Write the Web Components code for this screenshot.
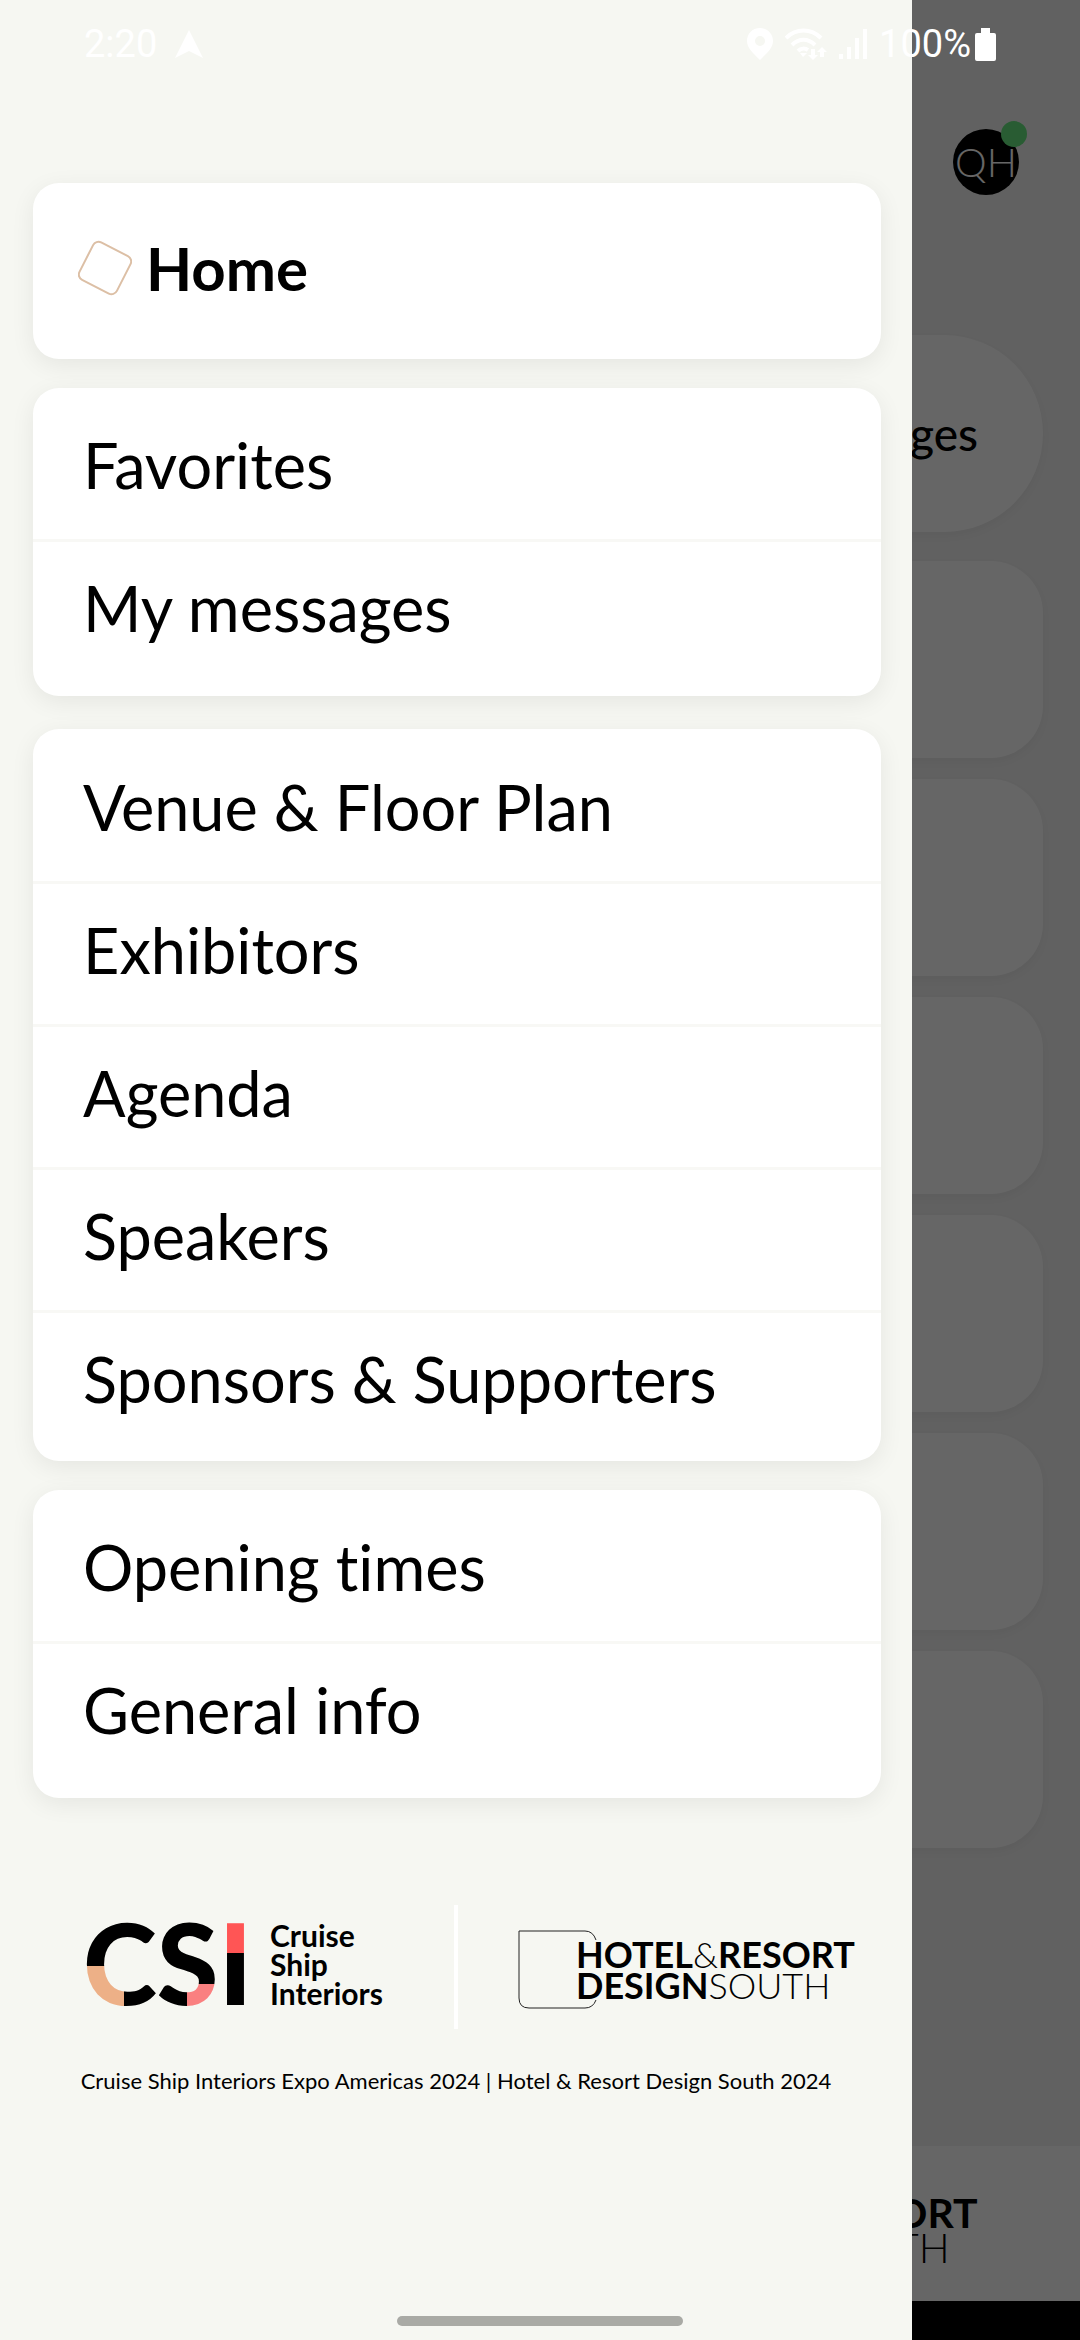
<!DOCTYPE html>
<html lang="en">
<head>
<meta charset="utf-8">
<meta name="viewport" content="width=device-width, initial-scale=1">
<title>Cruise Ship Interiors Expo Americas 2024</title>
<style>
  :root {
    --surface: #f6f7f2;
    --page: #f3f3f3;
    --card: #ffffff;
    --text: #000000;
    --accent: #dcbfa5;
  }

  body {
    color: var( --text );
    font-family: Lato, 'Open Sans', sans-serif;
    font-variant-ligatures: none;
    margin: 0;
  }
</style>
</head>
<body>

<event-app>
  <home-page slot="page"></home-page>
  <side-drawer slot="drawer">
    <menu-card>
      <menu-item active>Home</menu-item>
    </menu-card>
    <menu-card>
      <menu-item>Favorites</menu-item>
      <menu-item>My messages</menu-item>
    </menu-card>
    <menu-card long>
      <menu-item>Venue &amp; Floor Plan</menu-item>
      <menu-item>Exhibitors</menu-item>
      <menu-item>Agenda</menu-item>
      <menu-item>Speakers</menu-item>
      <menu-item>Sponsors &amp; Supporters</menu-item>
    </menu-card>
    <menu-card>
      <menu-item>Opening times</menu-item>
      <menu-item>General info</menu-item>
    </menu-card>
    <csi-logo slot="first"></csi-logo>
    <hotel-logo slot="second"></hotel-logo>
    <span slot="caption">Cruise Ship Interiors Expo Americas 2024 | Hotel &amp; Resort Design South 2024</span>
  </side-drawer>
  <status-bar slot="status">2:20</status-bar>
</event-app>

<script>
// Shared setup
// Clones the markup of the class into an open root
class EventElement extends HTMLElement {
  constructor() {
    super();

    const template = document.createElement( 'template' );
    template.innerHTML = this.constructor.markup;

    // Root
    this.attachShadow( {mode: 'open'} );
    this.shadowRoot.appendChild( template.content.cloneNode( true ) );
  }
}

class EventApp extends EventElement {
  static markup = /* template */ `
    <style>
      :host {
        display: block;
        min-height: 100vh;
        position: relative;
      }

      .scrim {
        background: rgba( 0, 0, 0, 0.6 );
        inset: 0;
        position: absolute;
      }

      ::slotted( side-drawer ) {
        bottom: 0;
        left: 0;
        position: absolute;
        right: 168px;
        top: 0;
      }

      ::slotted( status-bar ) {
        left: 0;
        position: absolute;
        right: 0;
        top: 0;
      }

      .gesture {
        background: #a9aaa5;
        border-radius: 5px;
        bottom: 14px;
        height: 10px;
        left: 50%;
        margin-left: -143px;
        position: absolute;
        width: 286px;
      }
    </style>
    <slot name="page"></slot>
    <div class="scrim"></div>
    <slot name="drawer"></slot>
    <slot name="status"></slot>
    <div class="gesture"></div>
  `;
}

class StatusBar extends EventElement {
  static markup = /* template */ `
    <style>
      :host {
        align-items: center;
        box-sizing: border-box;
        color: #ffffff;
        display: flex;
        font-family: Roboto, sans-serif;
        font-size: 38px;
        height: 88px;
        justify-content: space-between;
        line-height: 48px;
        padding: 0 84px;
      }

      div {
        align-items: center;
        display: flex;
      }

      svg {
        display: block;
        fill: currentColor;
      }

      .left {
        gap: 18px;
      }

      .right {
        gap: 12px;
      }

      .power {
        gap: 4px;
      }
    </style>
    <div class="left">
      <slot></slot>
      <svg width="28" height="28" viewBox="0 0 28 28"><path d="M14 0 L28 28 L14 21 L0 28 Z"/></svg>
    </div>
    <div class="right">
      <svg width="26" height="32" viewBox="0 0 26 32"><path fill-rule="evenodd" d="M13 0 C5 0 0 6 0 13 C0 20 6 25 13 32 C20 25 26 20 26 13 C26 6 21 0 13 0 Z M13 8 A5 5 0 1 1 13 18 A5 5 0 1 1 13 8 Z"/></svg>
      <svg width="42" height="32" viewBox="0 0 42 32">
        <g fill="none" stroke="currentColor" stroke-width="4">
          <path d="M1 10 C11 0 26 0 36 10"/>
          <path d="M7 17 C14 10 23 10 30 17"/>
          <path d="M13 23 C16 20 20 20 23 22"/>
        </g>
        <path d="M15 25 H22 L18 29 Z"/>
        <path d="M26 21 H30 V27 H33 L28 32 L23 27 H26 Z M35 29 V24 H32 L37 19 L42 24 H39 V29 Z"/>
      </svg>
      <svg width="28" height="30" viewBox="0 0 28 30"><path d="M0 25 H4 V30 H0 Z M8 18 H12 V30 H8 Z M16 9 H20 V30 H16 Z M24 0 H28 V30 H24 Z"/></svg>
      <div class="power">
        100%
        <svg width="21" height="33" viewBox="0 0 21 33"><path d="M6 0 H15 V5 H19 Q21 5 21 7 V31 Q21 33 19 33 H2 Q0 33 0 31 V7 Q0 5 2 5 H6 Z"/></svg>
      </div>
    </div>
  `;
}

class HomePage extends EventElement {
  static markup = /* template */ `
    <style>
      :host {
        background: var( --page );
        display: flex;
        flex-direction: column;
        min-height: 100vh;
      }

      header {
        display: flex;
        justify-content: flex-end;
        padding: 129px 61px 0 0;
      }

      .avatar {
        align-items: center;
        background: #000000;
        border: none;
        border-radius: 50%;
        color: #ffffff;
        display: flex;
        font: 300 40px/48px Lato, sans-serif;
        height: 66px;
        justify-content: center;
        padding: 0;
        position: relative;
        width: 66px;
      }

      .avatar::after {
        background: #66e67f;
        border-radius: 50%;
        content: '';
        height: 26px;
        position: absolute;
        right: -8px;
        top: -8px;
        width: 26px;
      }

      main {
        display: flex;
        flex-direction: column;
        flex-grow: 1;
        gap: 21px;
        padding: 140px 37px 0 37px;
      }

      .messages {
        background: var( --card );
        border: none;
        border-radius: 100px;
        box-shadow: 0 4px 12px rgba( 0, 0, 0, 0.05 );
        color: var( --text );
        font: 500 46px/56px Lato, sans-serif;
        height: 197px;
        margin-bottom: 8px;
        padding: 0 65px;
        text-align: right;
      }

      .tile {
        background: var( --card );
        border-radius: 52px;
        box-shadow: 0 4px 12px rgba( 0, 0, 0, 0.05 );
        height: 197px;
      }

      footer {
        background: var( --card );
        display: flex;
        justify-content: flex-end;
        padding: 33px 101px 26px 0;
      }

      .system {
        background: #000000;
        height: 39px;
      }
    </style>
    <header>
      <button class="avatar">QH</button>
    </header>
    <main>
      <button class="messages">Messages</button>
      <div class="tile"></div>
      <div class="tile"></div>
      <div class="tile"></div>
      <div class="tile"></div>
      <div class="tile"></div>
      <div class="tile"></div>
    </main>
    <footer>
      <hotel-logo large></hotel-logo>
    </footer>
    <div class="system"></div>
  `;
}

class SideDrawer extends EventElement {
  static markup = /* template */ `
    <style>
      :host {
        background: var( --surface );
        box-sizing: border-box;
        display: block;
        padding-top: 183px;
      }

      nav {
        display: flex;
        flex-direction: column;
        gap: 29px;
        padding: 0 31px 0 33px;
      }

      .logos {
        align-items: center;
        display: grid;
        grid-template-columns: 1fr 4px 1fr;
        margin-top: 107px;
      }

      .first {
        padding-left: 86px;
      }

      .rule {
        background: #ffffff;
        height: 124px;
      }

      .second {
        padding-left: 60px;
      }

      p {
        font-size: 22px;
        line-height: 28px;
        margin: 38px 0 0 0;
        text-align: center;
      }
    </style>
    <nav>
      <slot></slot>
    </nav>
    <div class="logos">
      <div class="first"><slot name="first"></slot></div>
      <div class="rule"></div>
      <div class="second"><slot name="second"></slot></div>
    </div>
    <p><slot name="caption"></slot></p>
  `;
}

class MenuCard extends EventElement {
  static markup = /* template */ `
    <style>
      :host {
        background: var( --card );
        border-radius: 26px;
        box-shadow: 0 6px 24px rgba( 0, 0, 0, 0.07 );
        display: block;
        padding: 11px 0 14px 0;
      }

      :host( [long] ) {
        margin-top: 4px;
        padding: 12px 0 8px 0;
      }
    </style>
    <slot></slot>
  `;
}

class MenuItem extends EventElement {
  static markup = /* template */ `
    <style>
      :host {
        display: block;
      }

      :host( :not( :first-child ) ) {
        border-top: 3px solid #f8f8f5;
      }

      a {
        align-items: center;
        box-sizing: border-box;
        color: inherit;
        display: flex;
        font-size: 63px;
        height: 140px;
        line-height: 72px;
        padding: 0 50px 8px 50px;
        text-decoration: none;
      }

      svg {
        display: none;
      }

      :host( [active] ) a {
        font-size: 60px;
        font-weight: 700;
        gap: 14px;
        height: 151px;
        padding: 0 45px 4px 45px;
      }

      :host( [active] ) svg {
        display: block;
      }
    </style>
    <a href="#">
      <svg width="54" height="56" viewBox="0 0 54 56" fill="none" stroke="var( --accent )" stroke-width="2"><rect x="6" y="7" width="42" height="42" rx="6" transform="rotate( 27 27 28 )"/></svg>
      <slot></slot>
    </a>
  `;
}

class CsiLogo extends EventElement {
  static markup = /* template */ `
    <style>
      :host {
        display: block;
      }

      svg {
        display: block;
        overflow: visible;
      }
    </style>
    <svg width="300" height="84" viewBox="0 0 300 84">
      <defs>
        <pattern id="mark" x="-10" y="-40" width="310" height="160" patternUnits="userSpaceOnUse">
          <rect width="310" height="160" fill="#000000"/>
          <rect y="81" width="48" height="79" fill="#edb087"/>
          <rect x="111" y="99" width="34" height="61" fill="#fa8080"/>
          <rect x="145" width="40" height="68" fill="#ff5555"/>
        </pattern>
      </defs>
      <text x="-3" y="80" fill="url( #mark )" font-size="112" font-weight="900">CSI</text>
      <g font-size="30" font-weight="700">
        <text x="184" y="22">Cruise</text>
        <text x="184" y="51">Ship</text>
        <text x="184" y="80">Interiors</text>
      </g>
    </svg>
  `;
}

class HotelLogo extends EventElement {
  static markup = /* template */ `
    <style>
      :host {
        display: block;
        width: 338px;
      }

      :host( [large] ) {
        width: 385px;
      }

      svg {
        display: block;
        height: auto;
        overflow: visible;
        width: 100%;
      }
    </style>
    <svg viewBox="0 0 338 84">
      <path d="M78 15 Q75 6 67 6 H1 V73 Q1 83 11 83 H67 Q75 83 78 75" fill="none" stroke="#222222"/>
      <g font-size="36" font-weight="700">
        <text x="58" y="43">HOTEL<tspan font-weight="300">&amp;</tspan>RESORT</text>
        <text x="58" y="74">DESIGN<tspan font-weight="300">SOUTH</tspan></text>
      </g>
    </svg>
  `;
}

window.customElements.define( 'csi-logo', CsiLogo );
window.customElements.define( 'hotel-logo', HotelLogo );
window.customElements.define( 'menu-item', MenuItem );
window.customElements.define( 'menu-card', MenuCard );
window.customElements.define( 'status-bar', StatusBar );
window.customElements.define( 'home-page', HomePage );
window.customElements.define( 'side-drawer', SideDrawer );
window.customElements.define( 'event-app', EventApp );
</script>
</body>
</html>
